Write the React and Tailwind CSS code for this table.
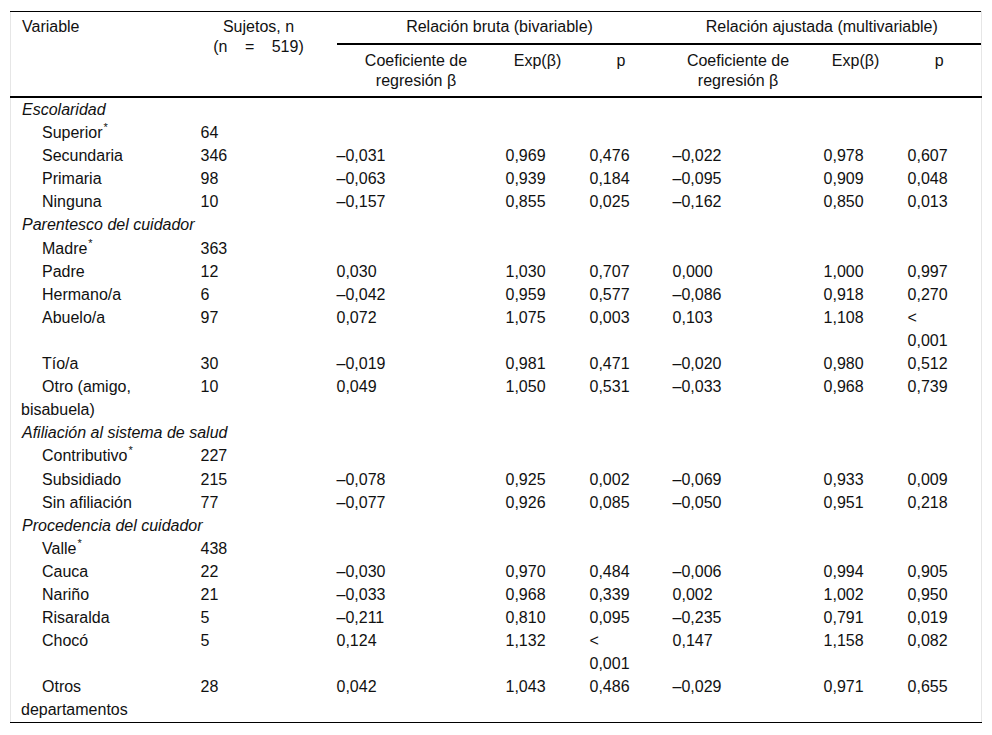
const FONT = { fontFamily: '"Liberation Sans", Arial, sans-serif' };

// [label, n, coefB, expB, pB, coefA, expA, pA, reference]
const groups = [
  {
    title: 'Escolaridad',
    rows: [
      ['Superior', '64', '', '', '', '', '', '', true],
      ['Secundaria', '346', '–0,031', '0,969', '0,476', '–0,022', '0,978', '0,607'],
      ['Primaria', '98', '–0,063', '0,939', '0,184', '–0,095', '0,909', '0,048'],
      ['Ninguna', '10', '–0,157', '0,855', '0,025', '–0,162', '0,850', '0,013'],
    ],
  },
  {
    title: 'Parentesco del cuidador',
    rows: [
      ['Madre', '363', '', '', '', '', '', '', true],
      ['Padre', '12', '0,030', '1,030', '0,707', '0,000', '1,000', '0,997'],
      ['Hermano/a', '6', '–0,042', '0,959', '0,577', '–0,086', '0,918', '0,270'],
      ['Abuelo/a', '97', '0,072', '1,075', '0,003', '0,103', '1,108', '<|0,001'],
      ['Tío/a', '30', '–0,019', '0,981', '0,471', '–0,020', '0,980', '0,512'],
      ['Otro (amigo,|bisabuela)', '10', '0,049', '1,050', '0,531', '–0,033', '0,968', '0,739'],
    ],
  },
  {
    title: 'Afiliación al sistema de salud',
    rows: [
      ['Contributivo', '227', '', '', '', '', '', '', true],
      ['Subsidiado', '215', '–0,078', '0,925', '0,002', '–0,069', '0,933', '0,009'],
      ['Sin afiliación', '77', '–0,077', '0,926', '0,085', '–0,050', '0,951', '0,218'],
    ],
  },
  {
    title: 'Procedencia del cuidador',
    rows: [
      ['Valle', '438', '', '', '', '', '', '', true],
      ['Cauca', '22', '–0,030', '0,970', '0,484', '–0,006', '0,994', '0,905'],
      ['Nariño', '21', '–0,033', '0,968', '0,339', '0,002', '1,002', '0,950'],
      ['Risaralda', '5', '–0,211', '0,810', '0,095', '–0,235', '0,791', '0,019'],
      ['Chocó', '5', '0,124', '1,132', '<|0,001', '0,147', '1,158', '0,082'],
      ['Otros|departamentos', '28', '0,042', '1,043', '0,486', '–0,029', '0,971', '0,655'],
    ],
  },
];

function Lines({ text }) {
  const parts = text.split('|');
  return parts.map((p, i) => (
    <span key={i}>
      {p}
      {i < parts.length - 1 && <br />}
    </span>
  ));
}

export default function App() {
  return (
    <div className="bg-white w-[992px] h-[735px] pl-[10px] pt-[11px] text-[#111]" style={FONT}>
      <table className="table-fixed border-collapse w-[971px] text-[16px] border-t border-b border-t-black border-b-black border-x border-x-[#e6e6e6]">
        <colgroup>
          <col className="w-[180px]" />
          <col className="w-[136px]" />
          <col className="w-[169px]" />
          <col className="w-[84px]" />
          <col className="w-[83px]" />
          <col className="w-[151px]" />
          <col className="w-[84px]" />
          <col className="w-[84px]" />
        </colgroup>
        <thead className="leading-[20px]">
          <tr>
            <th rowSpan={2} className="align-top text-left font-normal pl-[11px] pt-[5px] border-b-2 border-b-black">
              Variable
            </th>
            <th rowSpan={2} className="align-top text-center font-normal px-[10px] pt-[5px] border-b-2 border-b-black">
              Sujetos, n
              <br />
              <span className="[word-spacing:13px]">(n = 519)</span>
            </th>
            <th colSpan={3} className="align-top font-normal p-0 pl-[10px]">
              <div className="text-center pt-[5px] pb-[6px] border-b-2 border-black">Relación bruta (bivariable)</div>
            </th>
            <th colSpan={3} className="align-top font-normal p-0">
              <div className="text-center pt-[5px] pb-[6px] border-b-2 border-black">Relación ajustada (multivariable)</div>
            </th>
          </tr>
          <tr>
            <th className="align-top font-normal text-center pl-[20px] pr-[10px] pt-[6px] pb-[5px] border-b-2 border-b-black">
              Coeficiente de
              <br />
              regresión β
            </th>
            <th className="align-top font-normal text-center px-[10px] pt-[6px] pb-[5px] border-b-2 border-b-black">Exp(β)</th>
            <th className="align-top font-normal text-center px-[10px] pt-[6px] pb-[5px] border-b-2 border-b-black">p</th>
            <th className="align-top font-normal text-center px-[10px] pt-[6px] pb-[5px] border-b-2 border-b-black">
              Coeficiente de
              <br />
              regresión β
            </th>
            <th className="align-top font-normal text-center px-[10px] pt-[6px] pb-[5px] border-b-2 border-b-black">Exp(β)</th>
            <th className="align-top font-normal text-center px-[10px] pt-[6px] pb-[5px] border-b-2 border-b-black">p</th>
          </tr>
        </thead>
        <tbody className="leading-[23.1px]">
          {groups.map((g) => (
            <>
              <tr key={g.title}>
                <td colSpan={8} className="italic pl-[11px] p-0">
                  {g.title}
                </td>
              </tr>
              {g.rows.map((r) => (
                <tr key={g.title + r[0]} className="align-top">
                  <td className="pl-[10px] indent-[21px]">
                    <Lines text={r[0]} />
                    {r[8] && <span className="text-[11px] leading-none relative -top-[7px] pl-[1px]">*</span>}
                  </td>
                  {r.slice(1, 8).map((c, i) => (
                    <td key={i} className="pl-[10px] pr-[10px]">
                      <Lines text={c} />
                    </td>
                  ))}
                </tr>
              ))}
            </>
          ))}
        </tbody>
      </table>
    </div>
  );
}
